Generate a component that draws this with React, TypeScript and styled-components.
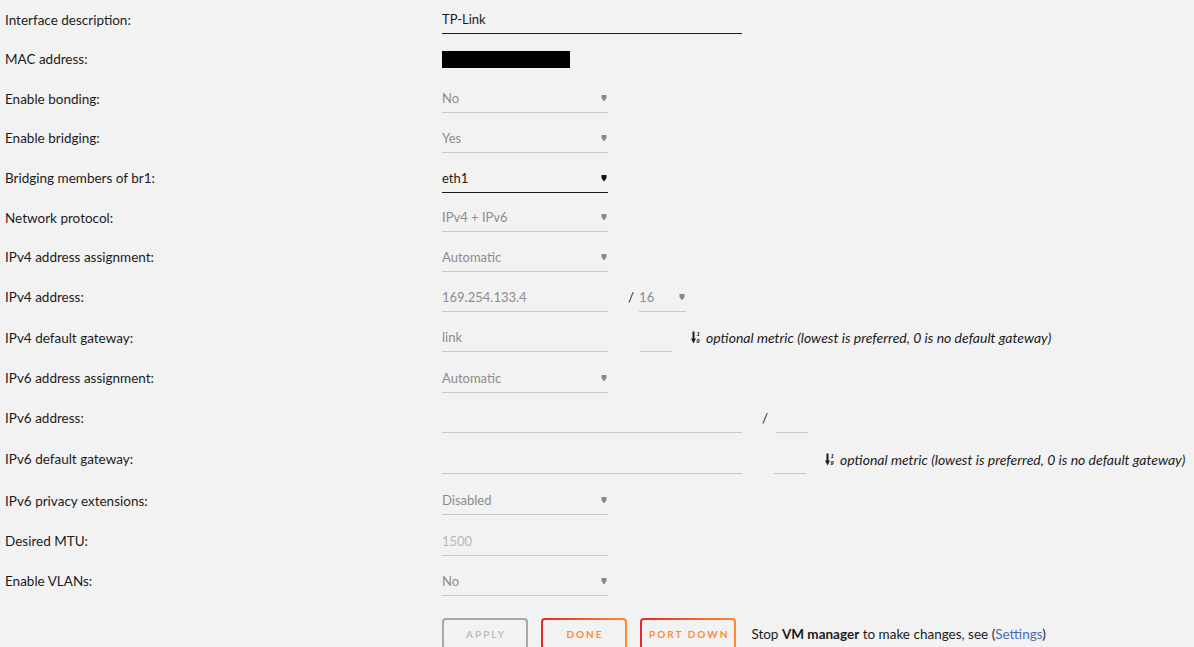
import React from 'react';
import styled, { createGlobalStyle } from 'styled-components';

const GlobalStyle = createGlobalStyle`
  html, body { margin: 0; padding: 0; background: #f2f2f2; }
  body {
    font-family: Lato, "Liberation Sans", Arial, sans-serif;
    font-size: 13.5px;
    color: #1c1b1b;
  }
`;

const Form = styled.div`
  padding-left: 5px;
  width: 1189px;
`;

const Row = styled.div<{ $h: number }>`
  display: grid;
  grid-template-columns: 437px auto;
  align-items: center;
  height: ${(p) => p.$h}px;
`;

const Label = styled.div`
  white-space: nowrap;
`;

const Value = styled.div`
  display: flex;
  align-items: center;
  white-space: nowrap;
`;

type Tone = 'active' | 'disabled' | 'placeholder';

const toneColor: Record<Tone, string> = {
  active: '#1c1b1b',
  disabled: '#8c8c8c',
  placeholder: '#b8b8b8',
};

const Field = styled.div<{ $w: number; $tone: Tone; $line?: 'dark' | 'light' }>`
  box-sizing: border-box;
  width: ${(p) => p.$w}px;
  height: 29px;
  line-height: 28px;
  font-size: 13px;
  border-bottom: 1px solid ${(p) => (p.$line === 'dark' ? '#1c1b1b' : '#c9c9c9')};
  display: flex;
  align-items: center;
  justify-content: space-between;
  padding-right: 1px;
  color: ${(p) => toneColor[p.$tone]};
  overflow: hidden;
`;

const Redacted = styled.span`
  display: block;
  width: 128px;
  height: 17px;
  background: #000;
`;

const Slash = styled.span<{ $before: number; $after: number }>`
  margin: 0 ${(p) => p.$after}px 0 ${(p) => p.$before}px;
  color: #1c1b1b;
`;

const Metric = styled.div`
  display: flex;
  align-items: center;
  margin-left: 32px;
`;

const Hint = styled.span`
  display: inline-flex;
  align-items: center;
  margin-left: 19px;
  font-size: 14px;
  font-style: italic;
  color: #1c1b1b;
`;

const SortIcon = styled.svg`
  flex: none;
  margin-right: 5px;
  color: #1c1b2b;
`;

const SortNumericIcon = () => (
  <SortIcon width="10" height="13" viewBox="0 0 10 13">
    <rect x="1.5" y="0.5" width="2" height="8" fill="currentColor" />
    <polygon points="0,7.5 5,7.5 2.5,12.5" fill="currentColor" />
    <text x="5.6" y="5.4" fontSize="6" fontWeight="bold" fontFamily="Liberation Sans, Arial, sans-serif" fill="currentColor">1</text>
    <text x="5.3" y="12" fontSize="6" fontWeight="bold" fontFamily="Liberation Sans, Arial, sans-serif" fill="currentColor">9</text>
  </SortIcon>
);

const ArrowSvg = styled.svg`
  flex: none;
`;

const Arrow = ({ dark }: { dark?: boolean }) => (
  <ArrowSvg width="6" height="6" viewBox="0 0 6 6">
    <polygon points="0.5,0 5.5,0 5.5,3 3.5,6 2.5,6 0.5,3" fill={dark ? '#111' : '#8a8a8a'} />
  </ArrowSvg>
);

const Select = ({ w, text, active }: { w: number; text: string; active?: boolean }) => (
  <Field $w={w} $tone={active ? 'active' : 'disabled'} $line={active ? 'dark' : 'light'}>
    <span>{text}</span>
    <Arrow dark={active} />
  </Field>
);

const Input = ({ w, text, tone = 'disabled', dark }: { w: number; text?: string; tone?: Tone; dark?: boolean }) => (
  <Field $w={w} $tone={tone} $line={dark ? 'dark' : 'light'}>
    <span>{text ?? ''}</span>
  </Field>
);

const MetricHint = () => (
  <Hint>
    <SortNumericIcon />
    optional metric (lowest is preferred, 0 is no default gateway)
  </Hint>
);

const ActionRow = styled.div`
  display: grid;
  grid-template-columns: 437px auto;
  padding-top: 17px;
  align-items: center;
`;

const Actions = styled.div`
  display: flex;
  align-items: center;
  gap: 13px;
  white-space: nowrap;
`;

const Button = styled.button`
  box-sizing: border-box;
  min-width: 86px;
  height: 32px;
  padding: 0 5px 0 7px;
  border: 2px solid transparent;
  border-radius: 4px;
  background:
    linear-gradient(#f2f2f2, #f2f2f2) padding-box,
    linear-gradient(to right, #e22828, #ff8c2f) border-box;
  color: #ff8c2f;
  font-family: Lato, "Liberation Sans", Arial, sans-serif;
  font-size: 10px;
  font-weight: bold;
  letter-spacing: 2px;
  text-transform: uppercase;
  cursor: pointer;

  &:disabled {
    background:
      linear-gradient(#f2f2f2, #f2f2f2) padding-box,
      linear-gradient(#a8a8a8, #a8a8a8) border-box;
    color: #bdbdbd;
    cursor: default;
  }
`;

const Status = styled.span`
  margin-left: 2px;
  color: #1c1b1b;
  b { font-weight: bold; }
  a { color: #486dba; text-decoration: none; }
`;

type RowDef = { label: string; h: number; value: React.ReactNode };

const rows: RowDef[] = [
  { label: 'Interface description:', h: 39, value: <Input w={300} text="TP-Link" tone="active" dark /> },
  { label: 'MAC address:', h: 40, value: <Redacted /> },
  { label: 'Enable bonding:', h: 39, value: <Select w={166} text="No" /> },
  { label: 'Enable bridging:', h: 40, value: <Select w={166} text="Yes" /> },
  { label: 'Bridging members of br1:', h: 40, value: <Select w={166} text="eth1" active /> },
  { label: 'Network protocol:', h: 39, value: <Select w={166} text="IPv4 + IPv6" /> },
  { label: 'IPv4 address assignment:', h: 40, value: <Select w={166} text="Automatic" /> },
  {
    label: 'IPv4 address:',
    h: 40,
    value: (
      <>
        <Input w={166} text="169.254.133.4" />
        <Slash $before={20} $after={5}>/</Slash>
        <Select w={47} text="16" />
      </>
    ),
  },
  {
    label: 'IPv4 default gateway:',
    h: 41,
    value: (
      <>
        <Input w={166} text="link" />
        <Metric>
          <Input w={32} />
        </Metric>
        <MetricHint />
      </>
    ),
  },
  { label: 'IPv6 address assignment:', h: 40, value: <Select w={166} text="Automatic" /> },
  {
    label: 'IPv6 address:',
    h: 40,
    value: (
      <>
        <Input w={300} />
        <Slash $before={20} $after={8}>/</Slash>
        <Input w={32} />
      </>
    ),
  },
  {
    label: 'IPv6 default gateway:',
    h: 42,
    value: (
      <>
        <Input w={300} />
        <Metric>
          <Input w={32} />
        </Metric>
        <MetricHint />
      </>
    ),
  },
  { label: 'IPv6 privacy extensions:', h: 41, value: <Select w={166} text="Disabled" /> },
  { label: 'Desired MTU:', h: 40, value: <Input w={166} text="1500" tone="placeholder" /> },
  { label: 'Enable VLANs:', h: 40, value: <Select w={166} text="No" /> },
];

export default function App() {
  return (
    <>
      <GlobalStyle />
      <Form>
        {rows.map((r) => (
          <Row key={r.label} $h={r.h}>
            <Label>{r.label}</Label>
            <Value>{r.value}</Value>
          </Row>
        ))}
        <ActionRow>
          <span />
          <Actions>
            <Button disabled>Apply</Button>
            <Button>Done</Button>
            <Button>Port Down</Button>
            <Status>
              Stop <b>VM manager</b> to make changes, see (<a href="#">Settings</a>)
            </Status>
          </Actions>
        </ActionRow>
      </Form>
    </>
  );
}
